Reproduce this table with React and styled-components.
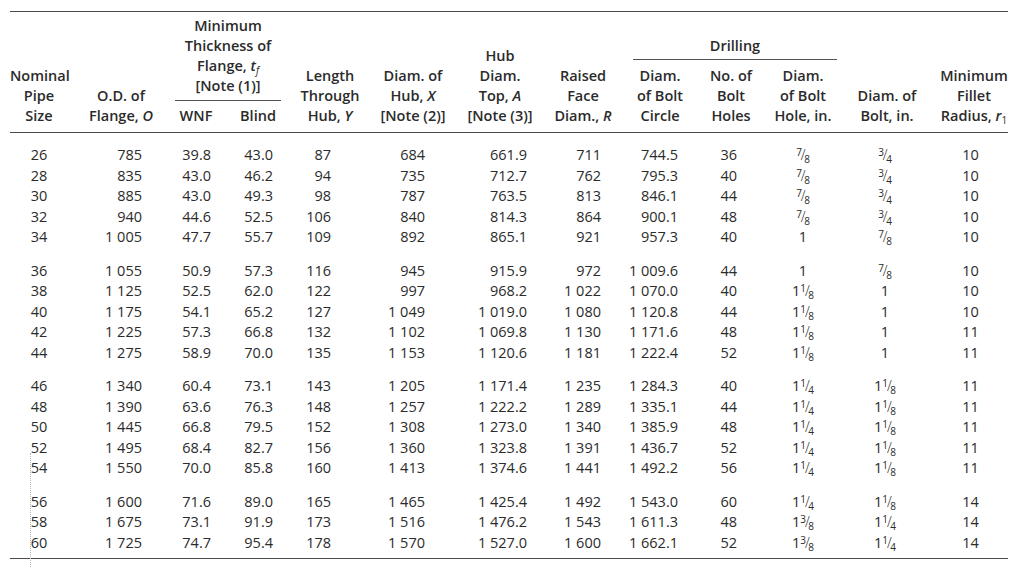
import React from "react";
import styled, { createGlobalStyle } from "styled-components";

const Global = createGlobalStyle`
  html, body { margin: 0; padding: 0; background: #fff; }
  body {
    font-family: "Open Sans", "Noto Sans", sans-serif;
    color: #2b2b2b;
    -webkit-font-smoothing: antialiased;
  }
`;

const COLS = [
  { w: 58, align: "center", pr: 0 },
  { w: 106, align: "right", pr: 32 },
  { w: 44, align: "right", pr: 7 },
  { w: 80, align: "right", pr: 25 },
  { w: 64, align: "right", pr: 31 },
  { w: 102, align: "right", pr: 39 },
  { w: 72, align: "right", pr: 9 },
  { w: 94, align: "right", pr: 29 },
  { w: 60, align: "right", pr: 12 },
  { w: 82, align: "right", pr: 35 },
  { w: 62, align: "center", pr: 0 },
  { w: 106, align: "center", pr: 4 },
  { w: 68, align: "center", pr: 7 },
];

const GROUPS = [
  [
    ["26", "785", "39.8", "43.0", "87", "684", "661.9", "711", "744.5", "36", "7/8", "3/4", "10"],
    ["28", "835", "43.0", "46.2", "94", "735", "712.7", "762", "795.3", "40", "7/8", "3/4", "10"],
    ["30", "885", "43.0", "49.3", "98", "787", "763.5", "813", "846.1", "44", "7/8", "3/4", "10"],
    ["32", "940", "44.6", "52.5", "106", "840", "814.3", "864", "900.1", "48", "7/8", "3/4", "10"],
    ["34", "1 005", "47.7", "55.7", "109", "892", "865.1", "921", "957.3", "40", "1", "7/8", "10"],
  ],
  [
    ["36", "1 055", "50.9", "57.3", "116", "945", "915.9", "972", "1 009.6", "44", "1", "7/8", "10"],
    ["38", "1 125", "52.5", "62.0", "122", "997", "968.2", "1 022", "1 070.0", "40", "1 1/8", "1", "10"],
    ["40", "1 175", "54.1", "65.2", "127", "1 049", "1 019.0", "1 080", "1 120.8", "44", "1 1/8", "1", "10"],
    ["42", "1 225", "57.3", "66.8", "132", "1 102", "1 069.8", "1 130", "1 171.6", "48", "1 1/8", "1", "11"],
    ["44", "1 275", "58.9", "70.0", "135", "1 153", "1 120.6", "1 181", "1 222.4", "52", "1 1/8", "1", "11"],
  ],
  [
    ["46", "1 340", "60.4", "73.1", "143", "1 205", "1 171.4", "1 235", "1 284.3", "40", "1 1/4", "1 1/8", "11"],
    ["48", "1 390", "63.6", "76.3", "148", "1 257", "1 222.2", "1 289", "1 335.1", "44", "1 1/4", "1 1/8", "11"],
    ["50", "1 445", "66.8", "79.5", "152", "1 308", "1 273.0", "1 340", "1 385.9", "48", "1 1/4", "1 1/8", "11"],
    ["52", "1 495", "68.4", "82.7", "156", "1 360", "1 323.8", "1 391", "1 436.7", "52", "1 1/4", "1 1/8", "11"],
    ["54", "1 550", "70.0", "85.8", "160", "1 413", "1 374.6", "1 441", "1 492.2", "56", "1 1/4", "1 1/8", "11"],
  ],
  [
    ["56", "1 600", "71.6", "89.0", "165", "1 465", "1 425.4", "1 492", "1 543.0", "60", "1 1/4", "1 1/8", "14"],
    ["58", "1 675", "73.1", "91.9", "173", "1 516", "1 476.2", "1 543", "1 611.3", "48", "1 3/8", "1 1/4", "14"],
    ["60", "1 725", "74.7", "95.4", "178", "1 570", "1 527.0", "1 600", "1 662.1", "52", "1 3/8", "1 1/4", "14"],
  ],
];

const Page = styled.div`
  position: relative;
  padding: 11px 16px 0 10px;
  height: 567px;
  box-sizing: border-box;
  overflow: hidden;
`;

const Table = styled.div`
  width: 998px;
  border-top: 1.5px solid #4a4a4a;
  border-bottom: 1.5px solid #4a4a4a;
  font-size: 14.5px;
`;

const Head = styled.div`
  display: flex;
  align-items: flex-end;
  padding: 4px 0 6px;
  border-bottom: 1.5px solid #4a4a4a;
  font-weight: 600;
  line-height: 20px;
`;

const HeadCell = styled.div`
  width: ${(p) => p.$w}px;
  flex: none;
  text-align: center;
  white-space: nowrap;
`;

const Group = styled.div`
  display: flex;
  flex-direction: column;
  flex: none;
`;

const GroupTitle = styled.div`
  text-align: center;
  white-space: nowrap;
  border-bottom: 1.4px solid #555;
  padding-bottom: ${(p) => p.$pb}px;
  margin: 0 ${(p) => p.$mr}px ${(p) => p.$mb}px ${(p) => p.$ml}px;
`;

const SubRow = styled.div`
  display: flex;
  align-items: flex-end;
`;

const Var = styled.i`
  font-style: italic;
`;

const Sub = styled.sub`
  font-size: 10px;
  line-height: 0;
  vertical-align: -3px;
  font-weight: 500;
`;

const Body = styled.div`
  padding: 12.5px 0 5px;
`;

const RowGroup = styled.div`
  & + & {
    margin-top: 13px;
  }
`;

const Row = styled.div`
  display: flex;
  height: 20.5px;
`;

const Cell = styled.div`
  width: ${(p) => p.$w}px;
  height: 20.5px;
  line-height: 20.5px;
  flex: none;
  box-sizing: border-box;
  display: flex;
  justify-content: ${(p) => (p.$align === "right" ? "flex-end" : "center")};
  padding-right: ${(p) => p.$pr}px;
  white-space: nowrap;
`;

const FracWrap = styled.span`
  white-space: nowrap;
`;

const Small = styled.span`
  font-size: 10px;
  line-height: 0;
  position: relative;
  top: ${(p) => p.$dy}px;
`;

const Slash = styled.span`
  font-size: 14px;
  line-height: 0;
  display: inline-block;
  margin: 0 -1.5px 0 -1px;
  transform: scaleY(1.05);
  font-weight: 300;
`;

const DotLine = styled.div`
  position: absolute;
  left: 30px;
  top: 453px;
  height: 120px;
  border-left: 1px dotted #b8b8b8;
`;

function Value({ text }) {
  if (!text.includes("/")) return <span>{text}</span>;
  const parts = text.split(" ");
  const frac = parts[parts.length - 1];
  const [n, d] = frac.split("/");
  return (
    <FracWrap>
      {parts.length > 1 && parts[0]}
      <Small $dy={-4}>{n}</Small>
      <Slash>/</Slash>
      <Small $dy={3}>{d}</Small>
    </FracWrap>
  );
}

export default function App() {
  return (
    <>
      <Global />
      <Page>
        <Table>
          <Head>
            <HeadCell $w={58}>
              Nominal<br />Pipe<br />Size
            </HeadCell>
            <HeadCell $w={106}>
              O.D. of<br />Flange, <Var>O</Var>
            </HeadCell>
            <Group>
              <GroupTitle $pb={4} $mb={4.5} $ml={1} $mr={17}>
                Minimum<br />Thickness of<br />Flange, <Var>t</Var>
                <Sub><Var>f</Var></Sub>
                <br />[Note (1)]
              </GroupTitle>
              <SubRow>
                <HeadCell $w={44}>WNF</HeadCell>
                <HeadCell $w={80}>Blind</HeadCell>
              </SubRow>
            </Group>
            <HeadCell $w={64}>
              Length<br />Through<br />Hub, <Var>Y</Var>
            </HeadCell>
            <HeadCell $w={102}>
              Diam. of<br />Hub, <Var>X</Var><br />[Note (2)]
            </HeadCell>
            <HeadCell $w={72}>
              Hub<br />Diam.<br />Top, <Var>A</Var><br />[Note (3)]
            </HeadCell>
            <HeadCell $w={94}>
              Raised<br />Face<br />Diam., <Var>R</Var>
            </HeadCell>
            <Group>
              <GroupTitle $pb={3} $mb={5.5} $ml={3} $mr={-3}>
                Drilling
              </GroupTitle>
              <SubRow>
                <HeadCell $w={60}>
                  Diam.<br />of Bolt<br />Circle
                </HeadCell>
                <HeadCell $w={82}>
                  No. of<br />Bolt<br />Holes
                </HeadCell>
                <HeadCell $w={62}>
                  Diam.<br />of Bolt<br />Hole, in.
                </HeadCell>
              </SubRow>
            </Group>
            <HeadCell $w={106}>
              Diam. of<br />Bolt, in.
            </HeadCell>
            <HeadCell $w={68}>
              Minimum<br />Fillet<br />Radius, <Var>r</Var>
              <Sub>1</Sub>
            </HeadCell>
          </Head>
          <Body>
            {GROUPS.map((g, gi) => (
              <RowGroup key={gi}>
                {g.map((row, ri) => (
                  <Row key={ri}>
                    {row.map((v, ci) => (
                      <Cell key={ci} $w={COLS[ci].w} $align={COLS[ci].align} $pr={COLS[ci].pr}>
                        <Value text={v} />
                      </Cell>
                    ))}
                  </Row>
                ))}
              </RowGroup>
            ))}
          </Body>
        </Table>
        <DotLine />
      </Page>
    </>
  );
}
